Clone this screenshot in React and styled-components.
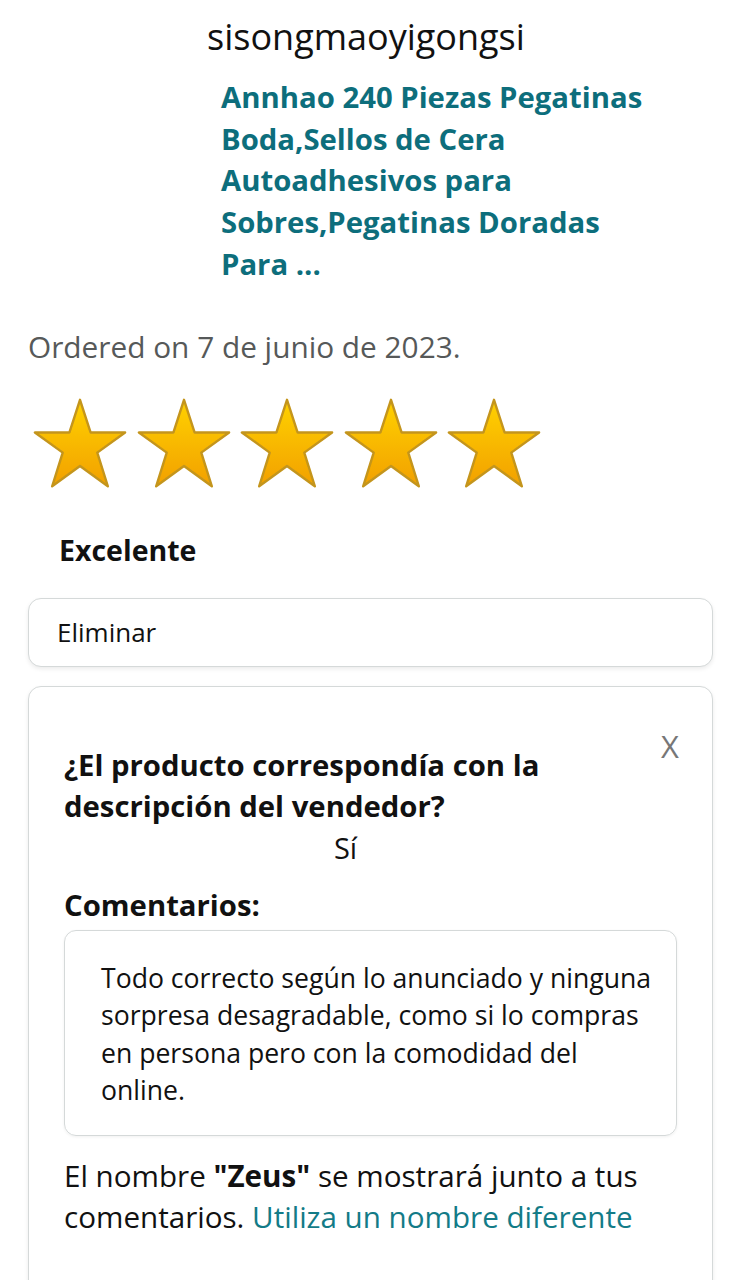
import React from "react";
import styled, { createGlobalStyle } from "styled-components";

const Global = createGlobalStyle`
  body {
    margin: 0;
    background: #fff;
    font-family: "Open Sans", "Noto Sans", sans-serif;
    color: #111;
  }
`;

const Page = styled.div`
  width: 741px;
  height: 1280px;
  overflow: hidden;
  display: flex;
  flex-direction: column;
  & > * {
    flex-shrink: 0;
  }
`;

const Seller = styled.div`
  padding: 15px 0 0 207px;
  font-size: 36px;
  line-height: 44px;
  color: #111;
`;

const ProductLink = styled.a`
  display: block;
  margin: 18px 0 0 221px;
  width: 450px;
  font-size: 29.3px;
  font-weight: 700;
  line-height: 41.7px;
  color: #0d6e7c;
  text-decoration: none;
`;

const Ordered = styled.div`
  margin: 41px 0 0 28px;
  font-size: 29.8px;
  line-height: 40px;
  color: #565959;
`;

const Stars = styled.div`
  display: flex;
  gap: 7.5px;
  margin: 29px 0 0 32px;
`;

const Rating = styled.div`
  margin: 38px 0 0 59px;
  font-size: 28.5px;
  font-weight: 700;
  line-height: 40px;
`;

const Box = styled.div`
  margin: 28px 28px 0 28px;
  border: 1.5px solid #d5d9d9;
  border-radius: 13px;
  box-shadow: 0 2px 4px rgba(0, 0, 0, 0.08);
  background: #fff;
`;

const DeleteBox = styled(Box)`
  height: 67px;
  display: flex;
  align-items: center;
  padding-left: 28px;
  font-size: 26px;
`;

const Card = styled(Box)`
  margin-top: 19px;
  position: relative;
  padding: 58px 35px 60px 35px;
`;

const Close = styled.div`
  position: absolute;
  top: 38px;
  right: 33px;
  font-size: 31px;
  color: #777;
`;

const Question = styled.div`
  font-size: 29.3px;
  font-weight: 700;
  line-height: 41px;
  width: 520px;
`;

const Answer = styled.div`
  text-align: center;
  font-size: 29px;
  line-height: 42px;
  margin-right: 50px;
`;

const Label = styled.div`
  margin-top: 16px;
  font-size: 29.3px;
  font-weight: 700;
  line-height: 40px;
`;

const CommentBox = styled.div`
  margin-top: 5px;
  border: 1.5px solid #d5d9d9;
  border-radius: 12px;
  padding: 29px 12px 25px 36px;
  font-size: 26.6px;
  line-height: 37.5px;
  box-shadow: 0 1px 3px rgba(0, 0, 0, 0.06);
`;

const Note = styled.div`
  margin-top: 19px;
  font-size: 29.6px;
  line-height: 41px;
  b {
    font-weight: 700;
  }
  a {
    color: #137b87;
    text-decoration: none;
  }
`;

function Star({ id }) {
  return (
    <svg width="96" height="96" viewBox="0 0 100 100">
      <defs>
        <linearGradient id={`g${id}`} x1="0" y1="0" x2="0" y2="1">
          <stop offset="0" stopColor="#ffd200" />
          <stop offset="1" stopColor="#f2a000" />
        </linearGradient>
        <filter id={`f${id}`} x="-10%" y="-10%" width="120%" height="120%">
          <feGaussianBlur stdDeviation="0.8" />
        </filter>
      </defs>
      <polygon
        points="50,4 61,38 97,38 68,59 79,94 50,73 21,94 32,59 3,38 39,38"
        fill={`url(#g${id})`}
        stroke="#c4951c"
        strokeWidth="2.5"
        strokeLinejoin="round"
        filter={`url(#f${id})`}
      />
    </svg>
  );
}

export default function App() {
  return (
    <Page>
      <Global />
      <Seller>sisongmaoyigongsi</Seller>
      <ProductLink href="#">
        Annhao 240 Piezas Pegatinas Boda,Sellos de Cera Autoadhesivos para
        Sobres,Pegatinas Doradas Para ...
      </ProductLink>
      <Ordered>Ordered on 7 de junio de 2023.</Ordered>
      <Stars>
        {[0, 1, 2, 3, 4].map((i) => (
          <Star key={i} id={i} />
        ))}
      </Stars>
      <Rating>Excelente</Rating>
      <DeleteBox>Eliminar</DeleteBox>
      <Card>
        <Close>X</Close>
        <Question>
          ¿El producto correspondía con la descripción del vendedor?
        </Question>
        <Answer>Sí</Answer>
        <Label>Comentarios:</Label>
        <CommentBox>
          Todo correcto según lo anunciado y ninguna sorpresa desagradable,
          como si lo compras en persona pero con la comodidad del online.
        </CommentBox>
        <Note>
          El nombre <b>"Zeus"</b> se mostrará junto a tus comentarios.{" "}
          <a href="#">Utiliza un nombre diferente</a>
        </Note>
      </Card>
    </Page>
  );
}
